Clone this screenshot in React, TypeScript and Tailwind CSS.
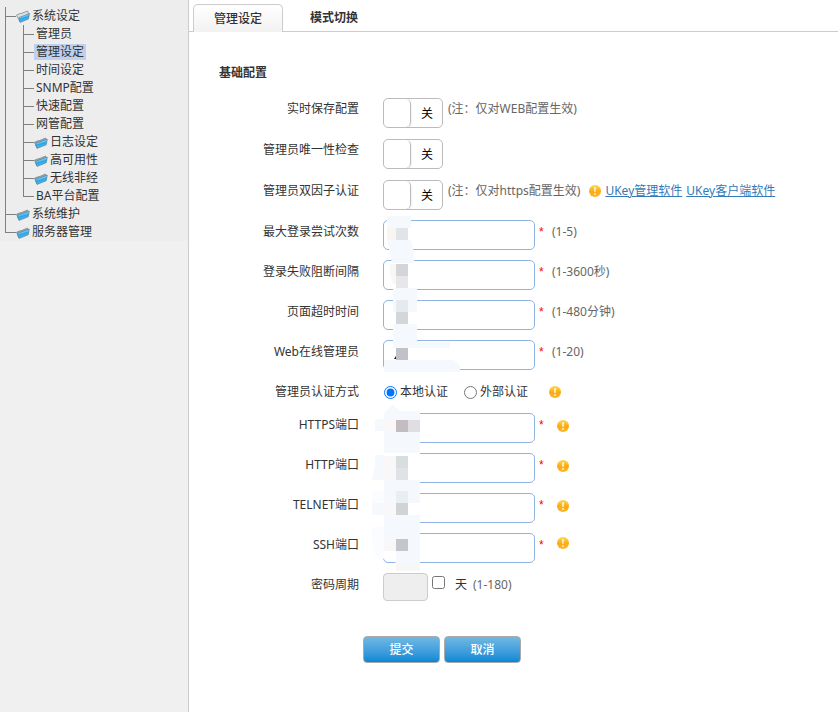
import { ReactNode, useState } from "react";

interface TreeNode {
  label: string;
  folder?: boolean;
  open?: boolean;
  children?: TreeNode[];
}

const tree: TreeNode[] = [
  {
    label: "系统设定",
    folder: true,
    open: true,
    children: [
      { label: "管理员" },
      { label: "管理设定" },
      { label: "时间设定" },
      { label: "SNMP配置" },
      { label: "快速配置" },
      { label: "网管配置" },
      { label: "日志设定", folder: true },
      { label: "高可用性", folder: true },
      { label: "无线非经", folder: true },
      { label: "BA平台配置" },
    ],
  },
  { label: "系统维护", folder: true },
  { label: "服务器管理", folder: true },
];

const limits = [
  { id: "max-login", label: "最大登录尝试次数", range: "(1-5)" },
  { id: "block-interval", label: "登录失败阻断间隔", range: "(1-3600秒)" },
  { id: "page-timeout", label: "页面超时时间", range: "(1-480分钟)" },
  { id: "web-admins", label: "Web在线管理员", range: "(1-20)" },
];

const ports = [
  { id: "https-port", label: "HTTPS端口" },
  { id: "http-port", label: "HTTP端口" },
  { id: "telnet-port", label: "TELNET端口" },
  { id: "ssh-port", label: "SSH端口" },
];

function FolderIcon({ open }: { open?: boolean }) {
  return (
    <svg width="14" height="14" viewBox="0 0 14 14" className="shrink-0" aria-hidden="true">
      <defs>
        <linearGradient id="folder-fill" x1="0" y1="0" x2="0.4" y2="1">
          <stop offset="0" stopColor="#1d94dc" />
          <stop offset="0.4" stopColor="#7ad6fc" />
          <stop offset="0.6" stopColor="#25a5ec" />
          <stop offset="1" stopColor="#5cc4f5" />
        </linearGradient>
      </defs>
      {open ? (
        <>
          <path d="M0.5 6 L4 4.6 L5 4.6 L11.5 2 L12.5 4.5 L4 13 Z" fill="#dbe2e6" stroke="#7c8c96" strokeWidth="0.8" />
          <path d="M3 8.6 L13.5 4.4 L12.4 10 L4.2 13.4 Z" fill="url(#folder-fill)" stroke="#5b8195" strokeWidth="0.7" />
        </>
      ) : (
        <>
          <path d="M0.5 7.2 L4 5.8 L5 5.8 L11.5 3 L12.5 5 L3 13 Z" fill="#8fa9b8" stroke="#7c8c96" strokeWidth="0.8" />
          <path d="M1.2 8.4 L13.3 4.2 L12.2 9.8 L3 13.4 Z" fill="url(#folder-fill)" stroke="#5b8195" strokeWidth="0.7" />
        </>
      )}
    </svg>
  );
}

function AlertIcon() {
  return (
    <svg width="12" height="12" viewBox="0 0 12 12" className="shrink-0" role="img" aria-label="提示">
      <defs>
        <linearGradient id="alert-fill" x1="0" y1="0" x2="0" y2="1">
          <stop offset="0" stopColor="#fdd84c" />
          <stop offset="0.55" stopColor="#fbaa12" />
          <stop offset="1" stopColor="#fcb72c" />
        </linearGradient>
      </defs>
      <circle cx="6" cy="6" r="6" fill="url(#alert-fill)" />
      <path d="M5.1 2.2 H6.9 L6.6 7 H5.4 Z" fill="#fffbe8" />
      <circle cx="6" cy="8.9" r="0.9" fill="#fffbe8" />
    </svg>
  );
}

function Tree({
  nodes,
  selected,
  onSelect,
  nested,
}: {
  nodes: TreeNode[];
  selected: string;
  onSelect: (label: string) => void;
  nested?: boolean;
}) {
  return (
    <ul className={nested ? "ml-[17px]" : "ml-[5px]"}>
      {nodes.map((node, i) => {
        const last = i === nodes.length - 1;
        return (
          <li key={node.label} className={last ? "" : "border-l border-[#808080]"}>
            <div className="flex h-[18px] items-center">
              <span
                className={`h-[10px] shrink-0 self-start border-b border-[#808080] ${
                  last ? "w-[11px] border-l" : "w-[10px]"
                }`}
              />
              {node.folder && <FolderIcon open={node.open} />}
              <a
                href="#"
                onClick={() => onSelect(node.label)}
                className={`leading-4 px-[2px] ${node.label === selected ? "bg-[#bdd0ee]" : ""}`}
              >
                {node.label}
              </a>
            </div>
            {node.children && (
              <Tree nodes={node.children} selected={selected} onSelect={onSelect} nested />
            )}
          </li>
        );
      })}
    </ul>
  );
}

function Row({ label, htmlFor, children }: { label: string; htmlFor?: string; children: ReactNode }) {
  return (
    <div className="flex items-start gap-6">
      <label htmlFor={htmlFor} className="w-[140px] shrink-0 text-right">
        {label}
      </label>
      {children}
    </div>
  );
}

function Toggle({ id }: { id: string }) {
  const [on, setOn] = useState(false);
  return (
    <button
      id={id}
      type="button"
      role="switch"
      aria-checked={on}
      onClick={() => setOn(!on)}
      className={`flex h-[30px] w-[60px] shrink-0 overflow-hidden rounded-[5px] border border-[#bbb] bg-white text-black ${
        on ? "flex-row-reverse" : ""
      }`}
    >
      <span className="h-full w-[27px] rounded-r-[5px] border-r border-[#bbb] shadow-sm" />
      <span className="flex-1 pl-px text-center leading-[30px]">{on ? "开" : "关"}</span>
    </button>
  );
}

function TextBox({ id }: { id: string }) {
  return (
    <input
      id={id}
      type="text"
      className="h-[30px] w-[152px] shrink-0 rounded-[5px] border border-[#8fb4e3] bg-white px-2 outline-none"
    />
  );
}

function Required() {
  return <span className="w-[17px] pl-1 font-['Liberation_Sans',sans-serif] text-[#f00]">*</span>;
}

// Masks the sensitive values of the limit fields
function LimitMask() {
  return (
    <svg width="80" height="160" viewBox="0 0 80 160" className="pointer-events-none absolute -top-1 left-[164px]" aria-hidden="true">
      <path d="M10 96H34V108H10Z M10 132H34V144H10Z M7 47H31V72H10Z" fill="#fff" />
      <path d="M4 0H28V12H4Z M4 24H28L31 36V47H9Z M10 72H34V96H10Z M10 108H34V126H67V132H34V126H10Z M1 144H71L77 150V156H1Z" fill="#f5f9fe" />
      <path d="M10 108H34V132H10Z" fill="#f5f9fe" />
      <path d="M4 12H13V24H4Z" fill="#f9f5f2" />
      <path d="M13 12H25V24H13Z" fill="#e1e5e8" />
      <path d="M7 48H13V68H10L7 58Z" fill="#f7f7f7" />
      <path d="M13 48H25V60H13Z" fill="#d4d5d9" />
      <path d="M13 60H25V72H13Z" fill="#e7e7e9" />
      <path d="M13 84H25V96H13Z" fill="#e6eaef" />
      <path d="M13 96H25V108H13Z" fill="#d3d7da" />
      <path d="M11 143L13 140V143H11Z" fill="#111" />
      <path d="M13 132H25V144H13Z" fill="#c1c1c8" />
    </svg>
  );
}

// Masks the port numbers
function PortMask() {
  return (
    <svg width="50" height="166" viewBox="0 0 50 166" className="pointer-events-none absolute -top-2 left-[153px]" aria-hidden="true">
      <path d="M11 8H48V158H24L17 150L11 154Z" fill="#fff" />
      <path d="M12 8L20 0L28 6H48V48H12V26H3V14H12Z M3 50H12V75H0L3 60Z M12 75H48V98H12Z M0 98H12V110H0Z M12 110H48V134H12Z M24 134H48V158H24Z" fill="#f5f9fe" />
      <path d="M0 86H12V98H0Z M0 122H12V147L8 155L3 150L0 134Z" fill="#fafcff" />
      <path d="M12 15H24V27H12Z M12 51H24V75H12Z M12 98H24V110H12Z M12 134H24V146H12Z" fill="#faf7f8" />
      <path d="M24 15H36V27H24Z" fill="#c3bdc2" />
      <path d="M36 15H48V27H36Z" fill="#e1dee3" />
      <path d="M24 51H36V63H24Z" fill="#d8dddd" />
      <path d="M24 63H36V75H24Z" fill="#e0e2e6" />
      <path d="M36 51H48V75H36Z" fill="#fff" />
      <path d="M24 86H36V98H24Z" fill="#eaedf2" />
      <path d="M24 98H36V110H24Z" fill="#d0d4d4" />
      <path d="M36 98H48V110H36Z" fill="#fff" />
      <path d="M24 134H36V146H24Z" fill="#c3c6ca" />
      <path d="M24 158H48V166H24Z" fill="#f7f7f7" />
    </svg>
  );
}

export default function App() {
  const [selected, setSelected] = useState("管理设定");
  const [auth, setAuth] = useState("local");

  return (
    <div className="flex min-h-screen bg-white font-['Noto_Sans','Noto_Sans_CJK_SC',sans-serif] text-xs text-[#333]">
      <aside className="w-[189px] shrink-0 border-r border-[#ccc] bg-[#f0f0f0]">
        <nav className="bg-[#ededed] pt-[7px]">
          <Tree nodes={tree} selected={selected} onSelect={setSelected} />
        </nav>
      </aside>

      <main className="min-w-0 flex-1">
        <div role="tablist" className="flex h-8 items-end border-b border-[#ccc] pl-1">
          <button
            type="button"
            role="tab"
            aria-selected="true"
            className="-mb-px h-7 w-[90px] rounded-t-[5px] border border-b-0 border-[#ccc] bg-linear-to-b from-white to-[#f2f2f2] font-medium"
          >
            管理设定
          </button>
          <button type="button" role="tab" aria-selected="false" className="h-[26px] w-[102px] font-bold">
            模式切换
          </button>
        </div>

        <form className="pl-[30px] leading-6" onSubmit={(e) => e.preventDefault()}>
          <h2 className="pt-[33px] leading-4 font-bold">基础配置</h2>

          <div className="flex flex-col gap-[11px] pt-[17px] leading-[22px]">
            <Row label="实时保存配置" htmlFor="live-save">
              <div className="flex gap-[5px]">
                <Toggle id="live-save" />
                <span className="text-[#666]">(注：仅对WEB配置生效)</span>
              </div>
            </Row>
            <Row label="管理员唯一性检查" htmlFor="unique-admin">
              <Toggle id="unique-admin" />
            </Row>
            <Row label="管理员双因子认证" htmlFor="two-factor">
              <div className="flex gap-[5px]">
                <Toggle id="two-factor" />
                <span className="text-[#666]">(注：仅对https配置生效)</span>
                <div className="flex h-[22px] items-center gap-1 pl-1 text-[#337ab7]">
                  <AlertIcon />
                  <a href="#" className="underline">UKey管理软件</a>
                  <a href="#" className="underline">UKey客户端软件</a>
                </div>
              </div>
            </Row>
          </div>

          <div className="relative mt-[10px] flex flex-col gap-[10px]">
            {limits.map((item) => (
              <Row key={item.id} label={item.label} htmlFor={item.id}>
                <div className="flex">
                  <TextBox id={item.id} />
                  <Required />
                  <span className="text-[#666]">{item.range}</span>
                </div>
              </Row>
            ))}
            <LimitMask />
          </div>

          <div className="mt-[10px]">
            <Row label="管理员认证方式">
              <div className="flex h-6 items-center">
                <label className="flex items-center gap-[3px] pl-px">
                  <input
                    type="radio"
                    name="auth"
                    className="size-[13px]"
                    checked={auth === "local"}
                    onChange={() => setAuth("local")}
                  />
                  本地认证
                </label>
                <label className="ml-4 flex items-center gap-[3px]">
                  <input
                    type="radio"
                    name="auth"
                    className="size-[13px]"
                    checked={auth === "external"}
                    onChange={() => setAuth("external")}
                  />
                  外部认证
                </label>
                <span className="pl-[21px]">
                  <AlertIcon />
                </span>
              </div>
            </Row>
          </div>

          <div className="relative mt-[9px] flex flex-col gap-[10px]">
            {ports.map((item) => (
              <Row key={item.id} label={item.label} htmlFor={item.id}>
                <div className="flex">
                  <TextBox id={item.id} />
                  <Required />
                  <span className={item.id === "ssh-port" ? "pt-1 pl-[5px]" : "pt-[7px] pl-[5px]"}>
                    <AlertIcon />
                  </span>
                </div>
              </Row>
            ))}
            <PortMask />
          </div>

          <div className="mt-[10px]">
            <Row label="密码周期" htmlFor="password-days">
              <div className="flex">
                <input
                  id="password-days"
                  type="text"
                  disabled
                  className="h-7 w-[45px] rounded-[4px] border border-[#ccc] bg-[#eee]"
                />
                <input type="checkbox" aria-label="启用密码周期" className="mt-[3px] ml-1 size-[13px]" />
                <span className="pl-[10px]">天</span>
                <span className="pl-[6px] text-[#666]">(1-180)</span>
              </div>
            </Row>
          </div>

          <div className="flex gap-1 pt-[35px] pb-8 pl-36 text-white">
            <button
              type="submit"
              className="h-[27px] w-[77px] rounded-[4px] border border-[#aaa] bg-linear-to-b from-[#6fb9e2] to-[#0088d6] font-medium"
            >
              提交
            </button>
            <button
              type="button"
              className="h-[27px] w-[77px] rounded-[4px] border border-[#aaa] bg-linear-to-b from-[#6fb9e2] to-[#0088d6] font-medium"
            >
              取消
            </button>
          </div>
        </form>
      </main>
    </div>
  );
}
